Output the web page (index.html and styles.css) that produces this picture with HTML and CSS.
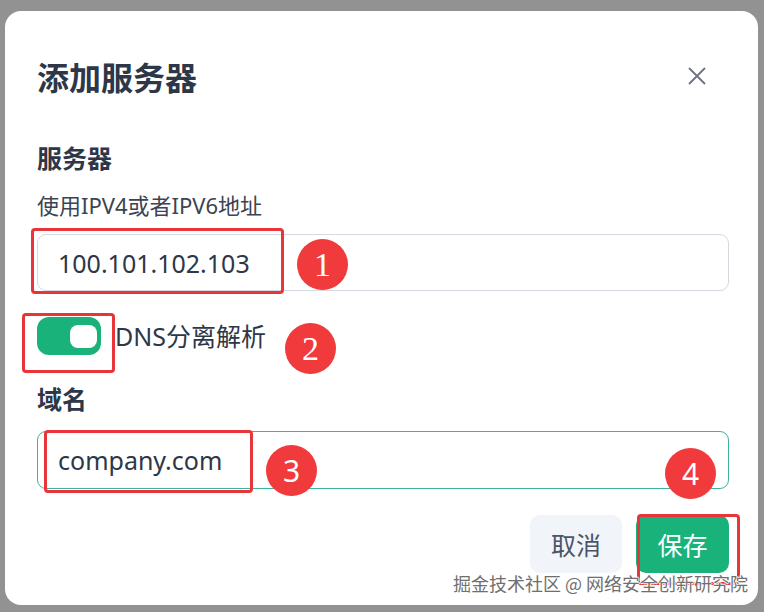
FILE: index.html
```html
<!DOCTYPE html>
<html lang="zh-CN">
<head>
<meta charset="utf-8">
<title>添加服务器</title>
<link rel="stylesheet" href="styles.css">
</head>
<body>
<div class="dialog">
  <div class="header">
    <h1 class="title">添加服务器</h1>
    <button class="close" aria-label="关闭">
      <svg width="18" height="18" viewBox="0 0 18 18"><path d="M1.5 1.5 L16.5 16.5 M16.5 1.5 L1.5 16.5" stroke="#6b7280" stroke-width="1.8" stroke-linecap="round" fill="none"/></svg>
    </button>
  </div>
  <div class="label">服务器</div>
  <div class="hint">使用IPV4或者IPV6地址</div>
  <div class="input">100.101.102.103</div>
  <div class="switch-row">
    <span class="switch"><span class="knob"></span></span>
    <span class="switch-text">DNS分离解析</span>
  </div>
  <div class="label label-domain">域名</div>
  <div class="input input-focus">company.com</div>
  <div class="footer">
    <button class="btn btn-cancel">取消</button>
    <button class="btn btn-save">保存</button>
  </div>
</div>

<div class="mark mark-1"></div>
<div class="mark mark-2"></div>
<div class="mark mark-3"></div>
<div class="mark mark-4"></div>
<div class="badge badge-serif badge-1">1</div>
<div class="badge badge-serif badge-2">2</div>
<div class="badge badge-3">3</div>
<div class="badge badge-4">4</div>
<div class="watermark">掘金技术社区 @ 网络安全创新研究院</div>
</body>
</html>
```
FILE: styles.css
```css
html, body {
  margin: 0;
  padding: 0;
}
body {
  width: 764px;
  height: 612px;
  background: #929292;
  padding: 11px 6px 7px 5px;
  box-sizing: border-box;
  position: relative;
  font-family: "Noto Sans", "Noto Sans CJK SC", sans-serif;
  color: #374151;
}
.dialog {
  height: 594px;
  background: #ffffff;
  border-radius: 16px;
  box-sizing: border-box;
  padding: 45px 29px 0 32px;
  display: flex;
  flex-direction: column;
}
.header {
  height: 40px;
  display: flex;
  align-items: center;
  justify-content: space-between;
}
.title {
  margin: 0;
  font-size: 32px;
  line-height: 40px;
  font-weight: 700;
  color: #2d3748;
  font-family: "Noto Sans CJK SC", sans-serif;
}
.close {
  width: 40px;
  height: 40px;
  margin-right: 12px;
  border: 0;
  background: transparent;
  padding: 0;
  display: flex;
  align-items: center;
  justify-content: center;
}
.label {
  margin-top: 45px;
  font-size: 25px;
  line-height: 32px;
  font-weight: 700;
  color: #2d3748;
  font-family: "Noto Sans CJK SC", sans-serif;
}
.hint {
  margin-top: 18px;
  font-size: 22px;
  line-height: 28px;
  color: #3b4452;
}
.input {
  margin-top: 15px;
  height: 57px;
  box-sizing: border-box;
  border: 1px solid #d5d9df;
  border-radius: 9px;
  padding: 0 20px;
  display: flex;
  align-items: center;
  font-size: 25px;
  color: #2d3748;
}
.switch-row {
  margin-top: 26px;
  display: flex;
  align-items: center;
  gap: 14px;
}
.switch {
  width: 64px;
  height: 38px;
  border-radius: 12px;
  background: #19b27b;
  display: flex;
  align-items: center;
  justify-content: flex-end;
  padding-right: 4px;
  box-sizing: border-box;
}
.knob {
  width: 27px;
  height: 23px;
  border-radius: 8px;
  background: #ffffff;
}
.switch-text {
  font-size: 25px;
  line-height: 32px;
  color: #2d3748;
}
.label-domain {
  margin-top: 27px;
}
.input-focus {
  margin-top: 17px;
  height: 58px;
  border-color: #3db3a0;
}
.footer {
  margin-top: 26px;
  display: flex;
  justify-content: flex-end;
  gap: 14px;
}
.btn {
  height: 58px;
  width: 92px;
  border: 0;
  border-radius: 10px;
  font-family: "Noto Sans CJK SC", sans-serif;
  font-size: 25px;
  padding: 0;
}
.btn-cancel {
  background: #f1f4f8;
  color: #4a5568;
}
.btn-save {
  background: #19b27b;
  color: #ffffff;
  width: 93px;
}
.mark {
  position: absolute;
  border: 3px solid #e8353a;
  border-radius: 4px;
  box-sizing: border-box;
}
.mark-1 { left: 31px; top: 228px; width: 253px; height: 66px; }
.mark-2 { left: 22px; top: 313px; width: 93px; height: 60px; }
.mark-3 { left: 44px; top: 430px; width: 209px; height: 63px; }
.mark-4 { left: 637px; top: 514px; width: 103px; height: 71px; }
.badge {
  position: absolute;
  width: 51px;
  height: 51px;
  border-radius: 50%;
  background: #f03a3b;
  color: #ffffff;
  display: flex;
  align-items: center;
  justify-content: center;
  font-family: "Noto Sans", sans-serif;
  font-size: 30px;
  line-height: 1;
}
.badge-serif {
  font-family: "Liberation Serif", serif;
  font-size: 34px;
}
.badge-1 { left: 297px; top: 239px; }
.badge-2 { left: 285px; top: 323px; }
.badge-3 { left: 266px; top: 445px; }
.badge-4 { left: 665px; top: 448px; }
.watermark {
  position: absolute;
  right: 16px;
  top: 570px;
  font-size: 18px;
  line-height: 26px;
  color: #6f6f6f;
  font-family: "Noto Sans CJK SC", sans-serif;
  text-shadow: 1px 0 0 #fff, -1px 0 0 #fff, 0 1px 0 #fff, 0 -1px 0 #fff;
}
```
